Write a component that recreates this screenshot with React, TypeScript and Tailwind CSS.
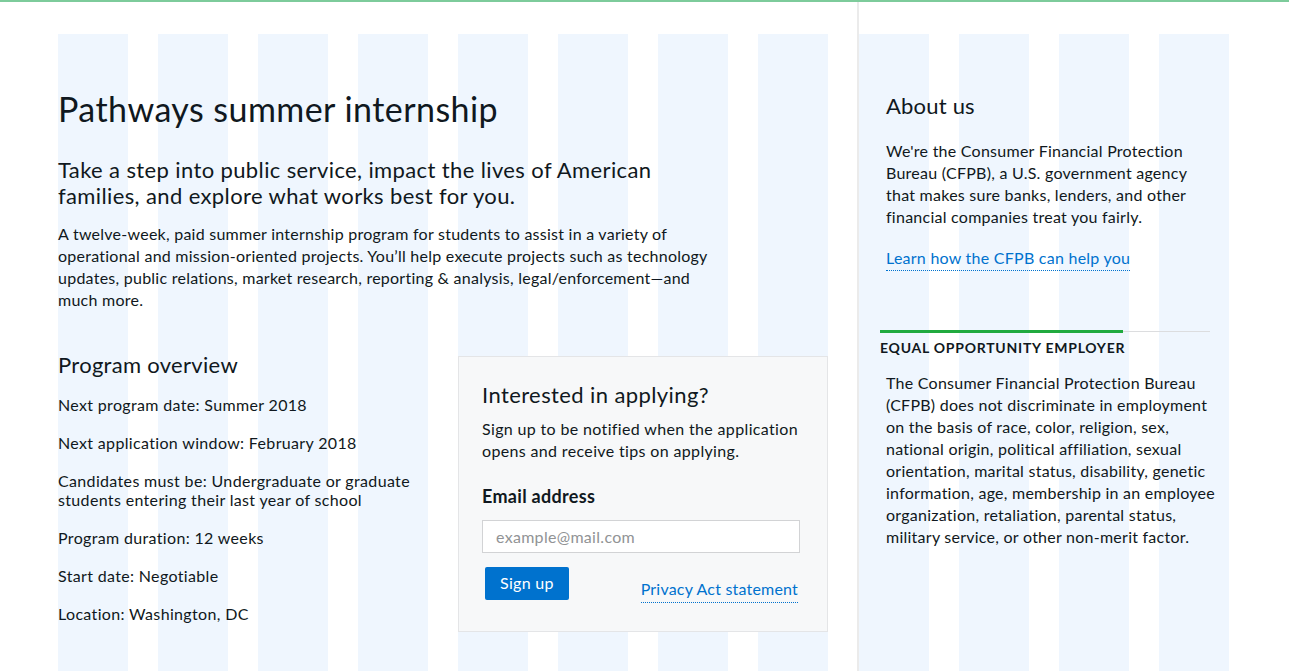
const items = [
  { label: "Next program date:", value: "Summer 2018" },
  { label: "Next application window:", value: "February 2018" },
  {
    label: "Candidates must be:",
    value: "Undergraduate or graduate students entering their last year of school",
  },
  { label: "Program duration:", value: "12 weeks" },
  { label: "Start date:", value: "Negotiable" },
  { label: "Location:", value: "Washington, DC" },
];

const grid =
  "bg-[linear-gradient(to_right,#eff6fe_70px,transparent_70px)] bg-[length:100px_100%]";

const SignupCard = () => {
  return (
    <div className="mt-[5px] border border-[#e4e5e7] bg-[#f7f8f9] pl-[23px] pr-[27px] pt-[24px] pb-[31px]">
      <h3 className="text-[22px] leading-[27.5px] tracking-[0.4px]">Interested in applying?</h3>
      <p className="mt-[9px] text-[16px] leading-[22px] tracking-[0.35px]">
        Sign up to be notified when the application opens and receive tips on applying.
      </p>
      <label className="mt-[22px] block text-[18px] font-bold leading-[24px] tracking-[0.3px]">
        Email address
      </label>
      <input
        type="email"
        placeholder="example@mail.com"
        className="mt-3 block h-[33px] w-[318px] border border-[#d2d3d5] bg-white px-[13px] text-[16px] tracking-[0.3px] outline-none placeholder:text-[#919395]"
      />
      <div className="mt-[14px] flex items-end justify-between pl-[3px] pr-[2px]">
        <button className="h-[33px] rounded-[2px] bg-[#0072ce] px-[15px] text-[16px] tracking-[0.3px] text-white">
          Sign up
        </button>
        <a
          href="#"
          className="mb-[-3px] inline-block border-b border-dotted border-[#0072ce] pb-[2px] text-[16px] leading-[22px] tracking-[0.2px] text-[#0072ce]"
        >
          Privacy Act statement
        </a>
      </div>
    </div>
  );
};

export default function App() {
  return (
    <div className="flex min-h-screen flex-col border-t-2 border-[#7dcb9b] bg-white font-['Lato',sans-serif] text-[#101820]">
      <div className="flex flex-1 pl-[58px] pr-[60px]">
        <main className={`mt-8 w-[770px] shrink-0 pt-[54px] ${grid}`}>
          <h1 className="text-[34px] leading-[42px] tracking-[0.45px]">
            Pathways summer internship
          </h1>
          <p className="mt-[27px] max-w-[645px] text-[22px] leading-[26px] tracking-[0.38px]">
            Take a step into public service, impact the lives of American families, and
            explore what works best for you.
          </p>
          <p className="mt-[14px] max-w-[670px] text-[16px] leading-[22px] tracking-[0.25px]">
            A twelve-week, paid summer internship program for students to assist in a
            variety of operational and mission-oriented projects. You’ll help execute
            projects such as technology updates, public relations, market research,
            reporting &amp; analysis, legal/enforcement—and much more.
          </p>

          <div className="mt-10 grid grid-cols-2 items-start gap-[30px]">
            <section>
              <h2 className="text-[22px] leading-[27.5px] tracking-[0.3px]">Program overview</h2>
              <ul className="mt-[16px] flex flex-col gap-[19px] text-[16px] leading-[19px] tracking-[0.34px]">
                {items.map((it) => (
                  <li key={it.label}>
                    {it.label} {it.value}
                  </li>
                ))}
              </ul>
            </section>
            <SignupCard />
          </div>
        </main>

        <aside className="ml-[29px] flex w-[372px] shrink-0 flex-col border-l-2 border-[#ebebeb]">
          <div className={`mt-8 flex-1 pl-[21px] pr-[19px] pt-[58px] ${grid}`}>
            <div className="pl-[6px]">
              <h2 className="text-[22px] leading-[27.5px] tracking-[0.2px]">About us</h2>
              <p className="mt-[20px] text-[16px] leading-[22px] tracking-[0.25px]">
                We're the Consumer Financial Protection Bureau (CFPB), a U.S. government
                agency that makes sure banks, lenders, and other financial companies treat
                you fairly.
              </p>
              <a
                href="#"
                className="mt-[19px] inline-block border-b border-dotted border-[#0072ce] pb-[1px] text-[16px] leading-[22px] tracking-[0.25px] text-[#0072ce]"
              >
                Learn how the CFPB can help you
              </a>
            </div>

            <div className="mt-[59px] flex items-center">
              <div className="h-[3px] w-[243px] bg-[#20aa3f]" />
              <div className="h-px flex-1 bg-[#dcdddf]" />
            </div>
            <h3 className="mt-[6px] text-[14px] font-bold uppercase leading-[18px] tracking-[0.75px]">
              Equal opportunity employer
            </h3>
            <p className="mr-[-8px] mt-[15px] pl-[6px] text-[16px] leading-[22px] tracking-[0.25px]">
              The Consumer Financial Protection Bureau (CFPB) does not discriminate in
              employment on the basis of race, color, religion, sex, national origin,
              political affiliation, sexual orientation, marital status, disability, genetic
              information, age, membership in an employee organization, retaliation,
              parental status, military service, or other non-merit factor.
            </p>
          </div>
        </aside>
      </div>
    </div>
  );
}
